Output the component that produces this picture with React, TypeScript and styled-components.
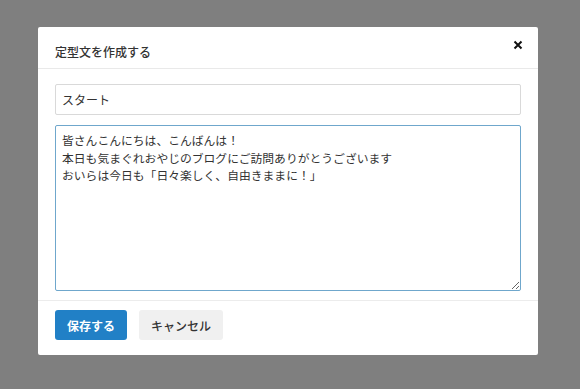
import styled, { createGlobalStyle } from "styled-components";

const GlobalStyle = createGlobalStyle`
  html, body {
    margin: 0;
    padding: 0;
    background: #7f7f7f;
  }
  body {
    font-family: "Noto Sans CJK JP", "Noto Sans", sans-serif;
  }
`;

const Backdrop = styled.div`
  width: 580px;
  height: 389px;
  box-sizing: border-box;
  padding: 27px 0 0 38px;
  background: #7f7f7f;
`;

const Modal = styled.div`
  width: 500px;
  height: 328px;
  background: #fff;
  border-radius: 2px;
  display: flex;
  flex-direction: column;
`;

const Header = styled.div`
  height: 42px;
  box-sizing: border-box;
  border-bottom: 1px solid #e9e9e9;
  display: flex;
  align-items: flex-start;
  justify-content: space-between;
  padding: 0 14px 0 17px;
`;

const Title = styled.h2`
  margin: 17px 0 0;
  font-size: 12px;
  line-height: 16px;
  font-weight: 500;
  color: #333;
`;

const CloseButton = styled.button`
  margin-top: 12px;
  width: 12px;
  height: 12px;
  padding: 0;
  border: none;
  background: transparent;
  display: flex;
  align-items: center;
  justify-content: center;
  cursor: pointer;
`;

const Body = styled.div`
  height: 232px;
  box-sizing: border-box;
  padding: 15px 17px 0;
  border-bottom: 1px solid #ececec;
  display: flex;
  flex-direction: column;
  gap: 10px;
`;

const TextInput = styled.input`
  height: 31px;
  box-sizing: border-box;
  width: 466px;
  border: 1px solid #d9d9d9;
  border-radius: 2px;
  padding: 0 6px;
  font-family: inherit;
  font-size: 12px;
  color: #333;
  outline: none;
`;

const TextArea = styled.textarea`
  height: 166px;
  box-sizing: border-box;
  width: 466px;
  border: 1px solid #6fa7cc;
  border-radius: 2px;
  padding: 5px 6px;
  font-family: inherit;
  font-size: 11.8px;
  line-height: 17.5px;
  color: #333;
  outline: none;
  resize: both;
`;

const Footer = styled.div`
  display: flex;
  gap: 12px;
  padding: 9px 17px 0;
`;

const Button = styled.button<{ $primary?: boolean }>`
  height: 30px;
  padding: 0 12px;
  border: none;
  border-radius: 3px;
  font-family: inherit;
  font-size: 12px;
  font-weight: ${(p) => (p.$primary ? 700 : 500)};
  color: ${(p) => (p.$primary ? "#fff" : "#333")};
  background: ${(p) => (p.$primary ? "#2180c6" : "#f0f0f0")};
  cursor: pointer;
`;

export default function App() {
  return (
    <>
      <GlobalStyle />
      <Backdrop>
        <Modal>
          <Header>
            <Title>定型文を作成する</Title>
            <CloseButton aria-label="閉じる">
              <svg width="10" height="10" viewBox="0 0 10 10">
                <path d="M1.5 1.5 L8.5 8.5 M8.5 1.5 L1.5 8.5" stroke="#111" strokeWidth="2" />
              </svg>
            </CloseButton>
          </Header>
          <Body>
            <TextInput defaultValue="スタート" />
            <TextArea
              defaultValue={
                "皆さんこんにちは、こんばんは！\n本日も気まぐれおやじのブログにご訪問ありがとうございます\nおいらは今日も「日々楽しく、自由きままに！」"
              }
            />
          </Body>
          <Footer>
            <Button $primary>保存する</Button>
            <Button>キャンセル</Button>
          </Footer>
        </Modal>
      </Backdrop>
    </>
  );
}
